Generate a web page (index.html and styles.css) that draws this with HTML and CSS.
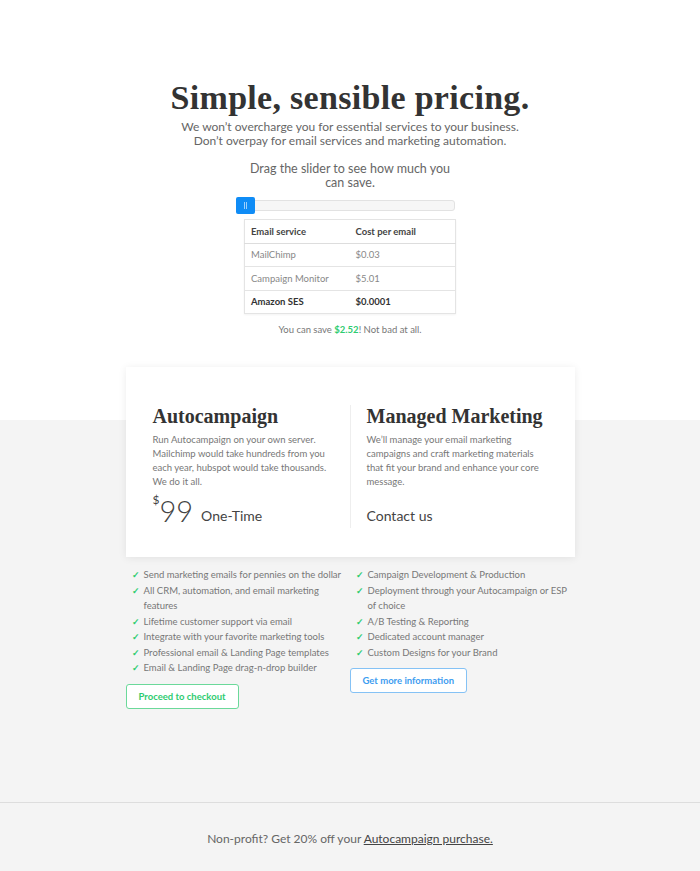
FILE: index.html
```html
<!DOCTYPE html>
<html>
<head>
<meta charset="utf-8">
<link rel="stylesheet" href="styles.css">
</head>
<body>
<section class="hero">
  <h1 class="title">Simple, sensible pricing.</h1>
  <p class="lead">We won’t overcharge you for essential services to your business.<br>Don’t overpay for email services and marketing automation.</p>
  <p class="drag">Drag the slider to see how much you can save.</p>
  <div class="slider"><div class="handle"><span class="grip"></span><span class="grip"></span></div></div>
  <table class="cost">
    <tr><th>Email service</th><th>Cost per email</th></tr>
    <tr><td>MailChimp</td><td>$0.03</td></tr>
    <tr><td>Campaign Monitor</td><td>$5.01</td></tr>
    <tr class="strong"><td>Amazon SES</td><td>$0.0001</td></tr>
  </table>
  <p class="save">You can save <b>$2.52</b>! Not bad at all.</p>
</section>
<section class="plans">
  <div class="card">
    <div class="col">
      <h2>Autocampaign</h2>
      <p class="desc">Run Autocampaign on your own server. Mailchimp would take hundreds from you each year, hubspot would take thousands. We do it all.</p>
      <div class="price"><sup>$</sup><span class="num">99</span><span class="per">One-Time</span></div>
    </div>
    <div class="col right">
      <h2>Managed Marketing</h2>
      <p class="desc">We’ll manage your email marketing campaigns and craft marketing materials that fit your brand and enhance your core message.</p>
      <div class="price"><span class="contact">Contact us</span></div>
    </div>
  </div>
  <div class="features">
    <div class="fcol">
      <ul>
        <li>Send marketing emails for pennies on the dollar</li>
        <li>All CRM, automation, and email marketing features</li>
        <li>Lifetime customer support via email</li>
        <li>Integrate with your favorite marketing tools</li>
        <li>Professional email &amp; Landing Page templates</li>
        <li>Email &amp; Landing Page drag-n-drop builder</li>
      </ul>
      <a class="btn green">Proceed to checkout</a>
    </div>
    <div class="fcol rightlist">
      <ul>
        <li>Campaign Development &amp; Production</li>
        <li>Deployment through your Autocampaign or ESP of choice</li>
        <li>A/B Testing &amp; Reporting</li>
        <li>Dedicated account manager</li>
        <li>Custom Designs for your Brand</li>
      </ul>
      <a class="btn blue">Get more information</a>
    </div>
  </div>
</section>
<footer class="foot">
  <p>Non-profit? Get 20% off your <a>Autocampaign purchase.</a></p>
</footer>
</body>
</html>
```
FILE: styles.css
```css
* { box-sizing: border-box; }
html, body { margin: 0; padding: 0; }
body {
  font-family: "Lato", "Noto Sans", sans-serif;
  color: #666;
  background: #f4f4f4;
}
.hero {
  background: #fff;
  padding: 80px 0 0;
  height: 420px;
  display: flex;
  flex-direction: column;
  align-items: center;
}
.title {
  font-family: "Liberation Serif", "DejaVu Serif", serif;
  font-weight: bold;
  font-size: 34px;
  color: #333;
  margin: 0;
  line-height: 36px;
  letter-spacing: 0.3px;
}
.lead {
  margin: 4px 0 0;
  font-size: 12px;
  line-height: 14px;
  text-align: center;
  color: #666;
}
.drag {
  margin: 14px 0 0;
  width: 212px;
  text-align: center;
  font-size: 12.5px;
  line-height: 14px;
  color: #666;
}
.slider {
  margin: 10px 9px 0 0;
  width: 219px;
  height: 11px;
  border: 1px solid #e2e2e2;
  background: #f6f6f6;
  border-radius: 3px;
  position: relative;
}
.handle {
  position: absolute;
  left: -1px;
  top: -4px;
  width: 19px;
  height: 17px;
  background: #0f8cf6;
  border-radius: 2px;
  display: flex;
  justify-content: center;
  align-items: center;
  gap: 1px;
}
.grip { width: 1px; height: 7px; background: #9fd0fb; }
.cost {
  margin-top: 8px;
  width: 212px;
  border-collapse: collapse;
  font-size: 9.5px;
  border: 1px solid #e4e4e4;
  box-shadow: 0 1px 2px rgba(0,0,0,0.05);
}
.cost th, .cost td {
  text-align: left;
  padding: 0 6px;
  height: 23.5px;
  border-top: 1px solid #e4e4e4;
  color: #888;
  font-weight: normal;
}
.cost th { color: #444; font-weight: bold; border-bottom: 1px solid #ddd; }
.cost td:first-child, .cost th:first-child { width: 105px; }
.cost .strong td { color: #333; font-weight: bold; }
.save {
  margin: 10px 0 0;
  font-size: 9.5px;
  color: #777;
}
.save b { color: #2ecc71; }
.plans {
  position: relative;
  margin-top: -53px;
  display: flex;
  flex-direction: column;
  align-items: center;
}
.card {
  width: 449px;
  height: 190px;
  background: #fff;
  box-shadow: 0 1px 8px rgba(0,0,0,0.08);
  display: flex;
  padding: 38px 0 29px 27px;
}
.col { width: 197px; padding: 0 14px 0 0; }
.col.right {
  border-left: 1px solid #eee;
  padding-left: 16px;
  padding-right: 30px;
  width: 225px;
}
.col h2 {
  font-family: "Liberation Serif", "DejaVu Serif", serif;
  font-weight: bold;
  font-size: 20px;
  line-height: 22px;
  color: #333;
  margin: 0;
}
.desc {
  margin: 6px 0 0;
  font-size: 9.5px;
  line-height: 14px;
  color: #777;
}
.price {
  margin-top: 2px;
  height: 36px;
  display: flex;
  align-items: flex-end;
  color: #444;
}
.price sup { font-size: 12px; align-self: flex-start; line-height: 1; margin-top: 3px; }
.price .num { font-size: 29px; line-height: 32px; font-weight: 300; margin-right: 8px; }
.price .per { font-size: 14px; line-height: 20px; margin-bottom: 1px; }
.price .contact { font-size: 14px; line-height: 20px; margin-bottom: 1px; }
.features {
  width: 449px;
  display: flex;
  margin-top: 10px;
}
.fcol { width: 224px; }
.features ul { list-style: none; margin: 0; padding: 0 0 0 18px; }
.rightlist ul { padding-left: 18px; }
.features li {
  font-size: 9.5px;
  line-height: 15.5px;
  color: #777;
  position: relative;
}
.features li::before {
  content: "✓";
  position: absolute;
  left: -12px;
  color: #2ecc71;
  font-size: 9px;
  font-weight: bold;
}
.btn {
  display: inline-block;
  margin-top: 8px;
  font-size: 9.5px;
  font-weight: bold;
  padding: 0 12px;
  height: 25px;
  line-height: 23px;
  border-radius: 3px;
  background: #fff;
}
.btn.green { color: #2ecc71; border: 1px solid #6bd99a; }
.btn.blue { color: #3d9df0; border: 1px solid #85c2f5; }
.foot {
  position: absolute;
  left: 0; right: 0;
  top: 802px;
  border-top: 1px solid #ddd;
  height: 69px;
  text-align: center;
}
.foot p { margin: 28px 0 0; font-size: 12px; color: #666; }
.foot a { color: #444; text-decoration: underline; }
```
